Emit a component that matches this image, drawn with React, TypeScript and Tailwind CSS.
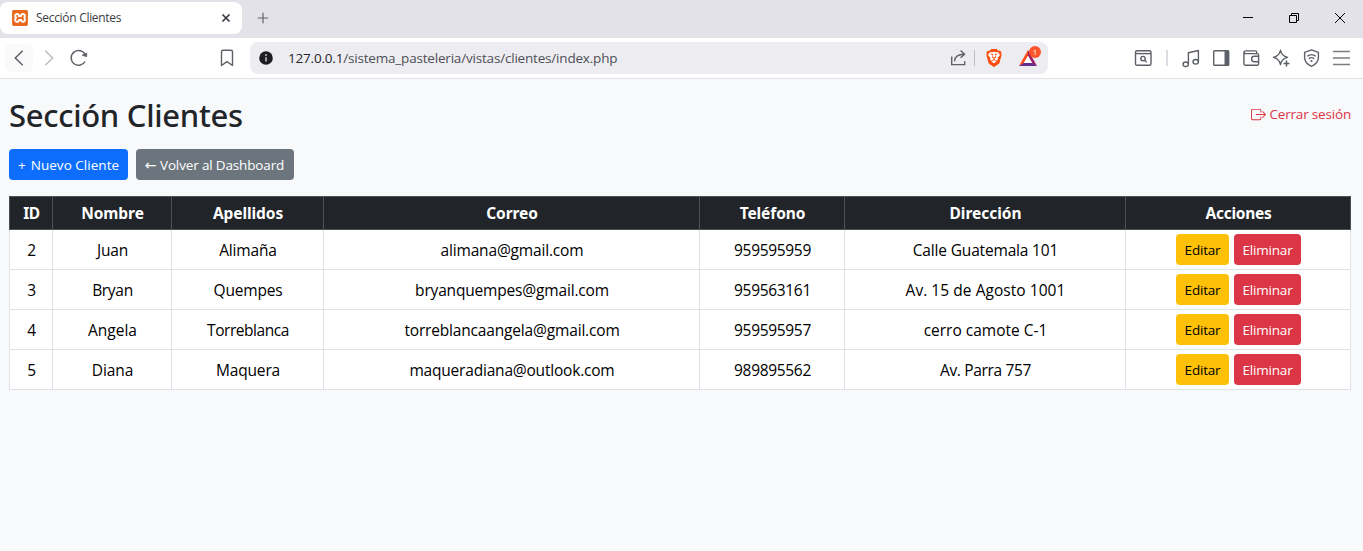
import React from "react";
import { SiXampp, SiBrave } from "react-icons/si";
import { BsBoxArrowRight } from "react-icons/bs";

type Cell = { text: string; tracking: string };

const c = (text: string, tracking = "tracking-[-0.17px]"): Cell => ({ text, tracking });

const columns: { label: string; width: string; tracking: string }[] = [
  { label: "ID", width: "w-[44px]", tracking: "tracking-[-0.4px]" },
  { label: "Nombre", width: "w-[119px]", tracking: "tracking-[-0.06px]" },
  { label: "Apellidos", width: "w-[152px]", tracking: "tracking-[-0.08px]" },
  { label: "Correo", width: "w-[376px]", tracking: "tracking-[-0.09px]" },
  { label: "Teléfono", width: "w-[145px]", tracking: "tracking-[-0.11px]" },
  { label: "Dirección", width: "w-[281px]", tracking: "tracking-[-0.02px]" },
  { label: "Acciones", width: "w-[225px]", tracking: "tracking-[-0.27px]" },
];

const num = "tracking-[-0.32px]";

const rows: Cell[][] = [
  [c("2"), c("Juan", "tracking-[-0.25px]"), c("Alimaña"), c("alimana@gmail.com"), c("959595959", num), c("Calle Guatemala 101")],
  [c("3"), c("Bryan", "tracking-[-0.3px]"), c("Quempes"), c("bryanquempes@gmail.com"), c("959563161", num), c("Av. 15 de Agosto 1001", "tracking-[0.05px]")],
  [c("4"), c("Angela", "tracking-normal"), c("Torreblanca", "tracking-[-0.45px]"), c("torreblancaangela@gmail.com"), c("959595957", num), c("cerro camote C-1", "tracking-normal")],
  [c("5"), c("Diana", "tracking-[-0.1px]"), c("Maquera"), c("maqueradiana@outlook.com", "tracking-[-0.2px]"), c("989895562", num), c("Av. Parra 757", "tracking-[-0.35px]")],
];

function Slot({ children, className = "" }: { children: React.ReactNode; className?: string }) {
  return <div className={`flex h-[28px] w-[30px] shrink-0 items-center justify-center ${className}`}>{children}</div>;
}

function Icon({ children, className = "text-[#5d6066]" }: { children: React.ReactNode; className?: string }) {
  return (
    <svg width="20" height="20" viewBox="0 0 20 20" fill="none" stroke="currentColor" strokeWidth="1.4" className={className}>
      {children}
    </svg>
  );
}

function TabStrip() {
  return (
    <div className="flex h-[38px] items-center bg-[#e3e2e8]">
      <div className="mb-[2px] flex h-[32px] w-[242px] items-center rounded-[8px] bg-white pl-[12px] pr-[11px]">
        <div className="h-[16px] w-[16px] rounded-[2px] bg-white">
          <SiXampp size={16} color="#e8691d" />
        </div>
        <span className="ml-[8px] flex-1 whitespace-nowrap text-[12px] tracking-[-0.3px] text-[#3b3c42]">Sección Clientes</span>
        <svg width="10" height="10" viewBox="0 0 10 10" stroke="#3a3b40" strokeWidth="1.7">
          <path d="M1.5 1.5l7 7M8.5 1.5l-7 7" />
        </svg>
      </div>
      <svg className="mb-[2px] ml-[15px]" width="12" height="12" viewBox="0 0 12 12" stroke="#606168" strokeWidth="1.2">
        <path d="M6 .8v10.4M.8 6h10.4" />
      </svg>
      <div className="mb-[2px] ml-auto flex">
        <div className="flex w-[46px] justify-center">
          <svg width="12" height="12" viewBox="0 0 12 12" stroke="#000">
            <path d="M1 5.5h10" />
          </svg>
        </div>
        <div className="flex w-[46px] justify-center">
          <svg width="12" height="12" viewBox="0 0 12 12" stroke="#000" fill="none">
            <path d="M1.5 3.5h7v7h-7zM3.5 3.5v-2h7v7h-2" />
          </svg>
        </div>
        <div className="flex w-[46px] justify-center">
          <svg width="12" height="12" viewBox="0 0 12 12" stroke="#000">
            <path d="M1 1l10 10M11 1L1 11" />
          </svg>
        </div>
      </div>
    </div>
  );
}

function AddressBar() {
  return (
    <div className="ml-[8px] flex h-[32px] w-[798px] items-center rounded-[8px] bg-[#ededf1] pl-[9px]">
      <svg width="14" height="14" viewBox="0 0 14 14">
        <circle cx="7" cy="7" r="6.8" fill="#1c1c22" />
        <path d="M7 6.2v4.2" stroke="#c9c9ce" strokeWidth="1.5" />
        <circle cx="7" cy="4" r=".95" fill="#c9c9ce" />
      </svg>
      <span className="ml-[15px] flex-1 whitespace-nowrap text-[13.5px] tracking-[-0.19px] text-[#4e4f57]">
        <span className="text-[#26272c]">127.0.0.1</span>/sistema_pasteleria/vistas/clientes/index.php
      </span>
      <Icon>
        <path d="M3.7 8.5v8.1h13v-3.4" />
        <path d="M6.500 13.200c.3-4.200 3-7 9.600-7M12.600 2.600l3.900 3.600-3.900 3.600" />
      </Icon>
      <span className="ml-[6px] h-[16px] w-px bg-[#bfbfc6]" />
      <div className="ml-[10px] flex w-[18px] justify-center">
        <svg width="18" height="18" viewBox="0 0 18 18">
          <path d="M4.500 3h9l1.500 5-2 5-4 3-4-3-2-5z" fill="#fff" />
          <SiBrave size={18} color="#fb4f10" />
        </svg>
      </div>
      <div className="relative ml-[16px] mr-[11px] h-[20px] w-[18px]">
        <svg width="18" height="20" viewBox="0 0 18 20">
          <path d="M9 2L0 18l5-2.800L9 8z" fill="#ff4a1c" />
          <path d="M9 2l9 16-5-2.800L9 8z" fill="#9e1f63" />
          <path d="M0 18h18l-5-3.200H5z" fill="#662d91" />
          <path d="M9 7.800l4.200 7.200H4.800z" fill="#fff" />
        </svg>
        <span className="absolute left-[10px] top-[-2px] flex h-[12px] w-[12px] items-center justify-center rounded-full bg-[#fb542b] text-[8px] leading-none text-white">
          1
        </span>
      </div>
    </div>
  );
}

function Toolbar() {
  return (
    <div className="flex h-[41px] items-center border-b border-[#e1e1e8] bg-white pl-[4px] pr-[7px]">
      <Slot>
        <div className="flex h-[28px] w-[28px] items-center justify-center rounded-[6px] bg-[#fafafb]">
          <Icon>
            <path d="M13.700 2.800L6.300 10l7.400 7.200" strokeWidth="1.500" />
          </Icon>
        </div>
      </Slot>
      <Slot>
        <Icon className="text-[#bcbdc1]">
          <path d="M6.300 2.800L13.700 10l-7.400 7.200" strokeWidth="1.500" />
        </Icon>
      </Slot>
      <Slot>
        <Icon>
          <path d="M16.100 13.500a7.400 7.400 0 1 1 .3-6.500" strokeWidth="1.500" />
          <path d="M13.200 7.200l4.500 1.500V5z" fill="currentColor" strokeWidth=".8" strokeLinejoin="round" />
        </Icon>
      </Slot>
      <Slot className="ml-[118px]">
        <Icon>
          <path d="M4.500 3.800A1.600 1.600 0 0 1 6.100 2.200h7.800a1.600 1.600 0 0 1 1.600 1.600v13.700L10 13.600l-5.500 3.900z" strokeLinejoin="round" />
        </Icon>
      </Slot>
      <AddressBar />
      <div className="ml-auto flex items-center">
        <Slot>
          <Icon>
            <rect x="2.500" y="2.700" width="15.500" height="14.600" rx="1.600" />
            <path d="M2.500 5.600h15.500" />
            <circle cx="10" cy="10.600" r="2.200" />
            <path d="M11.600 12.200l2 2" />
          </Icon>
        </Slot>
        <div className="flex w-[18px] justify-center">
          <span className="h-[16px] w-[2px] bg-[#dddde3]" />
        </div>
        <Slot>
          <Icon>
            <ellipse cx="4.700" cy="16.300" rx="2.700" ry="2.300" />
            <ellipse cx="14.700" cy="13.800" rx="2.700" ry="2.300" />
            <path d="M7.400 16.300V4.800l10-2.300v11.300" strokeLinejoin="round" />
          </Icon>
        </Slot>
        <Slot>
          <Icon>
            <rect x="2.700" y="2.700" width="15" height="14.600" rx=".8" />
            <path d="M13.500 3h4v14h-4z" fill="currentColor" stroke="none" />
          </Icon>
        </Slot>
        <Slot>
          <Icon>
            <path d="M15.700 5.600V4.300a1.400 1.400 0 0 0-1.400-1.400H4.600a1.700 1.700 0 0 0-1.700 1.700v10.900a1.700 1.700 0 0 0 1.700 1.700h11.500a1.500 1.500 0 0 0 1.500-1.500V7.100a1.500 1.500 0 0 0-1.500-1.500H4.600A1.500 1.500 0 0 1 3 4.500" />
            <path d="M17.800 8.300h-4.500a2.700 2.700 0 0 0 0 5.400h4.500" />
          </Icon>
        </Slot>
        <Slot>
          <Icon>
            <path d="M9.500 2.300c.8 3.700 2.600 5.900 7 7.100-2.300.6-4 1.600-5.200 3-.8 1-1.400 2.400-1.800 4.100-.9-3.900-2.800-6.100-7-7.100 4.200-1.200 6.100-3.200 7-7.100z" strokeLinejoin="round" />
            <path d="M15.500 12.500v6M12.500 15.500h6" strokeWidth="1.600" />
          </Icon>
        </Slot>
        <Slot>
          <Icon>
            <path d="M10.500 1.800l6.900 2.600v5.100c0 4-2.600 6.900-6.900 8.900-4.300-2-6.900-4.900-6.900-8.900V4.400z" strokeLinejoin="round" />
            <path d="M6.300 8.300c2.500-2 5.900-2 8.400 0M7.800 10.700c1.600-1.300 3.800-1.300 5.400 0" />
            <circle cx="10.500" cy="13" r="1.100" fill="currentColor" stroke="none" />
          </Icon>
        </Slot>
        <Slot>
          <Icon className="text-[#7b7e83]">
            <path d="M2 3.500h17M2 10h17M2 16.500h17" strokeWidth="1.600" />
          </Icon>
        </Slot>
      </div>
    </div>
  );
}

function ClientsTable() {
  return (
    <table className="mt-[16px] w-[1342px] table-fixed border-separate border-spacing-0 text-center text-[15.5px] leading-[24px]">
      <thead>
        <tr>
          {columns.map((col) => (
            <th
              key={col.label}
              className={`h-[34px] border-y border-r border-[#4d5154] bg-[#212529] p-0 pl-px font-['Noto_Sans',sans-serif] font-bold text-white first:border-l ${col.width} ${col.tracking}`}
            >
              {col.label}
            </th>
          ))}
        </tr>
      </thead>
      <tbody>
        {rows.map((row) => (
          <tr key={row[0].text}>
            {row.map((cell, i) => (
              <td
                key={i}
                className={`h-[40px] border-b border-r border-[#dee2e6] bg-white p-0 pl-px pt-px text-black first:border-l ${cell.tracking}`}
              >
                {cell.text}
              </td>
            ))}
            <td className="h-[40px] border-b border-r border-[#dee2e6] bg-white p-0">
              <div className="flex justify-center gap-[5px] text-[13.5px] tracking-[-0.2px]">
                <button className="h-[31px] w-[53px] rounded-[4px] bg-[#ffc107] pl-px text-black">Editar</button>
                <button className="h-[31px] w-[67px] rounded-[4px] bg-[#dc3545] pl-px text-white">Eliminar</button>
              </div>
            </td>
          </tr>
        ))}
      </tbody>
    </table>
  );
}

export default function App() {
  return (
    <div className="flex h-[551px] w-[1363px] flex-col overflow-hidden bg-[#f8f9fb] font-['Open_Sans','Noto_Sans',sans-serif]">
      <TabStrip />
      <Toolbar />
      <main className="flex-1 pl-[9px] pr-[12px] pt-[17px]">
        <div className="flex h-[38px] items-center justify-between">
          <h1 className="font-['Noto_Sans',sans-serif] text-[31px] font-medium leading-[38px] tracking-[-0.29px] text-[#212529]">
            Sección Clientes
          </h1>
          <a className="mb-[2px] flex items-center gap-[3px] whitespace-nowrap text-[13.5px] tracking-[-0.18px] text-[#dc3545]">
            <BsBoxArrowRight size={15} />
            Cerrar sesión
          </a>
        </div>
        <div className="mt-[15px] flex gap-[8px] text-[13.5px] text-white">
          <button className="flex h-[31px] w-[119px] items-center gap-[5px] whitespace-nowrap rounded-[4px] bg-[#0d6efd] pl-[9px] pt-px tracking-[0.03px]">
            <span>+</span>
            <span>Nuevo Cliente</span>
          </button>
          <button className="flex h-[31px] w-[158px] items-center gap-[3px] whitespace-nowrap rounded-[4px] bg-[#6c757d] pl-[8px] pt-px tracking-[-0.15px]">
            <span className="w-[13px] font-['DejaVu_Sans',sans-serif] text-[14px] leading-none">←</span>
            <span>Volver al Dashboard</span>
          </button>
        </div>
        <ClientsTable />
      </main>
    </div>
  );
}
